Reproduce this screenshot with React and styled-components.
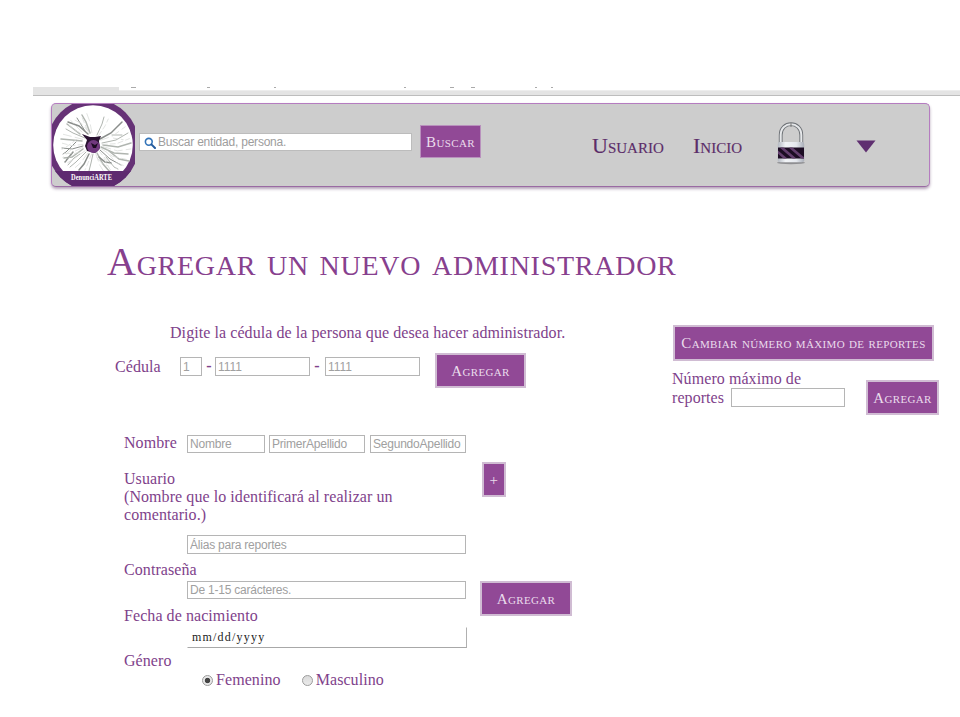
import React from 'react';
import styled, { createGlobalStyle } from 'styled-components';

const GlobalStyle = createGlobalStyle`
  * { box-sizing: border-box; }
  body { margin: 0; background: #fff; overflow: hidden; }
`;

const serif = '"Liberation Serif", "Times New Roman", serif';
const sans = '"Liberation Sans", Arial, sans-serif';

const Page = styled.div`
  width: 960px;
  height: 717px;
  padding-top: 87px;
  overflow: hidden;
  font: 16px/18px ${serif};
  letter-spacing: 0.07px;
  color: #80428b;
`;

const BrowserEdge = styled.div`
  display: flex;
  height: 9px;
  margin-left: 33px;
  background: #e4e4e4;
  border-bottom: 1px solid #bdbdbd;
`;

const AddressBar = styled.div`
  width: 841px;
  height: 4px;
  margin-left: 86px;
  background: #fff;
  border-bottom: 1px solid #ededed;
  svg { display: block; }
`;

const Header = styled.header`
  display: flex;
  align-items: flex-start;
  width: 879px;
  height: 84px;
  margin: 7px 0 0 51px;
  background: #cdcdcd;
  border: 1px solid #b57cc0;
  border-bottom-color: #9a6aa3;
  border-radius: 5px;
  box-shadow: 0 2px 3px rgba(90, 50, 100, 0.45);
`;

const Logo = styled.svg`
  display: block;
  flex: none;
  width: 83px;
  height: 82px;
`;

const SearchBox = styled.label`
  display: flex;
  align-items: center;
  width: 273px;
  height: 18px;
  margin: 29px 0 0 4px;
  padding-left: 4px;
  background: #fff;
  border: 1px solid #bcbcbc;
  svg { flex: none; margin-top: 2px; }
`;

const SearchInput = styled.input`
  width: 240px;
  height: 16px;
  padding: 0 0 1px 2px;
  border: 0;
  outline: 0;
  background: none;
  font: 12px/14px ${sans};
  letter-spacing: -0.22px;
  &::placeholder { color: #9d9d9d; opacity: 1; }
`;

const Button = styled.button`
  flex: none;
  width: ${p => p.$w}px;
  height: ${p => p.$h || 35}px;
  padding: 0;
  background: #914996;
  border: ${p => p.$border || 2}px solid #d0bcd3;
  color: #eadcec;
  font: 15px/18px ${serif};
  font-variant: small-caps;
  letter-spacing: ${p => p.$spacing || 0.35}px;
  white-space: nowrap;
`;

const HeaderButton = styled(Button)`
  margin: 21px 0 0 8px;
  border-color: #b991bd;
`;

const Nav = styled.nav`
  display: flex;
  align-items: flex-start;
  margin-left: 111px;
`;

const NavLink = styled.a`
  width: ${p => p.$w}px;
  margin-top: 29px;
  font: 22px/26px ${serif};
  font-variant: small-caps;
  letter-spacing: 0;
  color: #5c2d69;
  -webkit-text-stroke: 0.15px #5c2d69;
`;

const Lock = styled.svg`
  width: 32px;
  height: 44px;
  margin: 18px 0 0 0;
`;

const Caret = styled.svg`
  width: 20px;
  height: 13px;
  margin: 36px 0 0 49px;
`;

const Title = styled.h1`
  margin: 55px 0 0 107px;
  font: 400 40px/40px ${serif};
  font-variant: small-caps;
  letter-spacing: 0.74px;
  color: #87408e;
  white-space: nowrap;
`;

const Content = styled.main`
  display: grid;
  grid-template-columns: 565px 288px;
  margin: 41px 0 0 107px;
`;

const Intro = styled.p`
  margin: 0 0 12px 63px;
  white-space: nowrap;
  padding-top: 1px;
  height: 18px;
`;

const IdRow = styled.div`
  display: flex;
  height: 34px;
  padding-left: 8px;
`;

const IdLabel = styled.label`
  width: 65px;
  margin-top: 5px;
`;

const Field = styled.input`
  display: block;
  flex: none;
  width: ${p => p.$w}px;
  height: ${p => p.$h || 18}px;
  margin: ${p => p.$top || 0}px 0 0 ${p => p.$left || 0}px;
  padding: 0 0 0 2px;
  background: #fff;
  border: 1px solid #b5b5b5;
  border-radius: 0;
  outline: 0;
  font: 12px/14px ${sans};
  letter-spacing: ${p => p.$spacing ?? -0.22}px;
  &::placeholder { color: #a0a0a0; opacity: 1; }
`;

const DateField = styled(Field)`
  padding: 0 0 1px 4px;
  border-color: transparent #b0b0b0 #a8a8a8 transparent;
  font: 12px/14px ${serif};
  letter-spacing: 1.2px;
  &::placeholder { color: #222; }
`;

const Dash = styled.span`
  width: 13px;
  margin-top: 4px;
  padding-left: 1px;
  text-align: center;
  font-weight: 700;
`;

const IdButton = styled(Button)`margin-left: 15px;`;

const FormArea = styled.form`
  display: flex;
  margin: 46px 0 0 17px;
`;

const Fields = styled.div`width: 356px;`;

const NameRow = styled.div`
  display: flex;
  height: 20px;
`;

const NameLabel = styled.label`
  width: 63px;
  padding-top: 1px;
`;

const FormLabel = styled.label`
  display: block;
  width: 300px;
  margin-top: ${p => p.$top}px;
`;

const Actions = styled.div`
  display: flex;
  flex-direction: column;
  padding-top: 29px;
  gap: 84px;
`;

const PlusButton = styled(Button)`margin-left: 2px;`;

const RadioRow = styled.div`
  display: flex;
  margin: 1px 0 0 78px;
  gap: 21px;
`;

const RadioLabel = styled.label`
  display: flex;
  align-items: center;
  gap: 3px;
  letter-spacing: 0.08px;
`;

const RadioDot = styled.span`
  width: 11px;
  height: 11px;
  border: 1px solid #9b9b9b;
  border-radius: 50%;
  background: ${p => p.$on
    ? 'radial-gradient(circle, #444 0 2.3px, #e8e8e8 3.1px)'
    : 'linear-gradient(#dadada, #ebebeb)'};
`;

const Reports = styled.section`padding-top: 2px;`;

const ReportsToggle = styled(Button)`
  display: block;
  margin-left: 1px;
`;

const ReportsRow = styled.div`
  display: flex;
  padding-top: 8px;
`;

const ReportsLabel = styled.label`
  width: 194px;
  line-height: 19px;
`;

const InlineField = styled.span`
  display: flex;
  justify-content: space-between;
  width: 173px;
  height: 19px;
  white-space: nowrap;
`;

const ReportsButton = styled(Button)`margin-top: 11px;`;

const cracks = [
  'M36 30 L27 22 L16 18', 'M33 34 L21 29 L14 25', 'M30 37 L20 36 L9 35', 'M31 42 L20 45 L10 44',
  'M31 45 L20 53 L12 54', 'M34 48 L24 58 L18 63', 'M37 50 L32 60 L27 66', 'M41 50 L39 59 L37 67',
  'M45 49 L51 60 L58 68', 'M48 46 L58 55 L69 61', 'M49 43 L62 49 L76 50', 'M50 39 L64 36 L76 29',
  'M48 35 L59 29 L70 18', 'M45 31 L50 20 L52 13', 'M38 29 L34 18 L30 11', 'M24 38 L14 48 L11 50',
  'M51 41 L66 43 L79 39', 'M54 53 L62 63 L66 65', 'M21 48 L13 58', 'M60 31 L70 31', 'M28 30 L15 20',
  'M33 27 L25 14', 'M57 47 L67 55 L77 57', 'M28 50 L22 54 L16 61', 'M47 53 L53 58 L59 59',
];

const marks = [[12, 5], [88, 3], [155, 2], [285, 2], [331, 4], [352, 4], [416, 2], [432, 2]];

function LogoMark() {
  return (
    <Logo viewBox="0 0 83 82">
      <defs><clipPath id="badge"><circle cx="41" cy="41" r="46" /></clipPath></defs>
      <g clipPath="url(#badge)">
        <rect width="83" height="82" fill="#663276" />
        <circle cx="41" cy="41" r="39.8" fill="#fff" />
        <g fill="none" strokeLinecap="round">
          {cracks.map((d, i) => (
            <path key={d} d={d} stroke={i % 3 ? '#b0b5b0' : '#8a8e8b'} strokeWidth={i % 2 ? 1 : 1.5} />
          ))}
          {cracks.map((d, i) => (
            <path key={d} d={d} transform="rotate(9 41 41)" stroke="#d8dbd8" strokeWidth="0.7" strokeDasharray={i % 2 ? '5 3' : '8 4'} />
          ))}
        </g>
        <path d="M30 30 l8 3 l5 0 l6 -1 l-2 5 l1 7 l-5 5 l-8 -2 l-2 -5 l2 -6 z" fill="#2a1232" />
        <circle cx="41.5" cy="42.5" r="6.5" fill="#71397f" />
        <path d="M39 39 l4 2 l3 -2 l-2 5 l-3 0 z" fill="#1c0b22" />
        <rect y="67" width="83" height="15" fill="#5e2a70" />
      </g>
      <text x="19" y="76" fill="#fff" fontFamily="Liberation Serif, serif" fontSize="7.5" fontWeight="700" textLength="41" lengthAdjust="spacingAndGlyphs">DenunciARTE</text>
    </Logo>
  );
}

function LockIcon() {
  return (
    <Lock viewBox="0 0 32 44">
      <defs>
        <linearGradient id="metal" x1="0" x2="1">
          <stop offset="0" stopColor="#b4b9c2" /><stop offset=".3" stopColor="#f2f4f7" />
          <stop offset=".7" stopColor="#e4e7ed" /><stop offset="1" stopColor="#a9aeb8" />
        </linearGradient>
        <clipPath id="band"><rect x="3" y="25.5" width="26" height="11" /></clipPath>
      </defs>
      <ellipse cx="16" cy="40.7" rx="14" ry="1.5" fill="#8f8f92" />
      <path d="M5.7 22 V13 C5.7 -1.4 26.3 -1.4 26.3 13 V22" fill="none" stroke="#6d7176" strokeWidth="3.8" />
      <path d="M5.7 22 V13 C5.7 -1.4 26.3 -1.4 26.3 13 V22" fill="none" stroke="#e6e8ea" strokeWidth="2" />
      <path d="M16 1 v4" stroke="#777" strokeWidth="1" />
      <rect x="2.8" y="20" width="26.4" height="20.3" rx="2" fill="url(#metal)" />
      <g clipPath="url(#band)">
        <rect x="3" y="25" width="26" height="12" fill="#1d0d24" />
        <path d="M-3 25 l14 12 M6 25 l14 12 M15 25 l14 12" stroke="#64406f" strokeWidth="2.6" />
      </g>
    </Lock>
  );
}

export default function App() {
  return (
    <Page>
      <GlobalStyle />
      <BrowserEdge>
        <AddressBar>
          <svg width="560" height="1">
            {marks.map(([x, w]) => <rect key={x} x={x} width={w} height="1" fill="#aaa" />)}
          </svg>
        </AddressBar>
      </BrowserEdge>
      <Header>
        <LogoMark />
        <SearchBox>
          <svg width="12" height="12" viewBox="0 0 12 12" fill="none">
            <circle cx="4.8" cy="4.8" r="3.4" stroke="#3273b8" strokeWidth="1.6" />
            <path d="M7.4 7.4 L11 11" stroke="#245a9c" strokeWidth="2" strokeLinecap="round" />
          </svg>
          <SearchInput placeholder="Buscar entidad, persona." />
        </SearchBox>
        <HeaderButton $w={61} $h={33} $border={1}>Buscar</HeaderButton>
        <Nav>
          <NavLink $w={101}>Usuario</NavLink>
          <NavLink $w={82}>Inicio</NavLink>
          <LockIcon />
          <Caret viewBox="0 0 20 13"><path d="M0.5 0.5 H19.5 L10 12.5 Z" fill="#5f2f70" /></Caret>
        </Nav>
      </Header>
      <Title>Agregar un nuevo administrador</Title>
      <Content>
        <section>
          <Intro>Digite la cédula de la persona que desea hacer administrador.</Intro>
          <IdRow>
            <IdLabel>Cédula</IdLabel>
            <Field $w={22} $h={19} $top={4} $spacing={0} placeholder="1" />
            <Dash>-</Dash>
            <Field $w={95} $h={19} $top={4} $spacing={0} placeholder="1111" />
            <Dash>-</Dash>
            <Field $w={95} $h={19} $top={4} $left={2} $spacing={0} placeholder="1111" />
            <IdButton $w={91}>Agregar</IdButton>
          </IdRow>
          <FormArea>
            <Fields>
              <NameRow>
                <NameLabel>Nombre</NameLabel>
                <Field $w={78} $top={2} placeholder="Nombre" />
                <Field $w={96} $top={2} $left={4} placeholder="PrimerApellido" />
                <Field $w={96} $top={2} $left={5} placeholder="SegundoApellido" />
              </NameRow>
              <FormLabel $top={17}>Usuario<br />(Nombre que lo identificará al realizar un comentario.)</FormLabel>
              <Field $w={279} $h={19} $top={11} $left={63} placeholder="Álias para reportes" />
              <FormLabel $top={7}>Contraseña</FormLabel>
              <Field $w={279} $top={2} $left={63} placeholder="De 1-15 carácteres." />
              <FormLabel $top={8}>Fecha de nacimiento</FormLabel>
              <DateField $w={280} $h={21} $top={2} $left={63} placeholder="mm/dd/yyyy" />
              <FormLabel $top={4}>Género</FormLabel>
              <RadioRow>
                <RadioLabel><RadioDot $on />Femenino</RadioLabel>
                <RadioLabel><RadioDot />Masculino</RadioLabel>
              </RadioRow>
            </Fields>
            <Actions>
              <PlusButton type="button" $w={24}>+</PlusButton>
              <Button type="button" $w={92}>Agregar</Button>
            </Actions>
          </FormArea>
        </section>
        <Reports>
          <ReportsToggle $w={261} $h={36}>Cambiar número máximo de reportes</ReportsToggle>
          <ReportsRow>
            <ReportsLabel>
              Número máximo de
              <InlineField>reportes<Field $w={114} $h={19} /></InlineField>
            </ReportsLabel>
            <ReportsButton $w={73}>Agregar</ReportsButton>
          </ReportsRow>
        </Reports>
      </Content>
    </Page>
  );
}
